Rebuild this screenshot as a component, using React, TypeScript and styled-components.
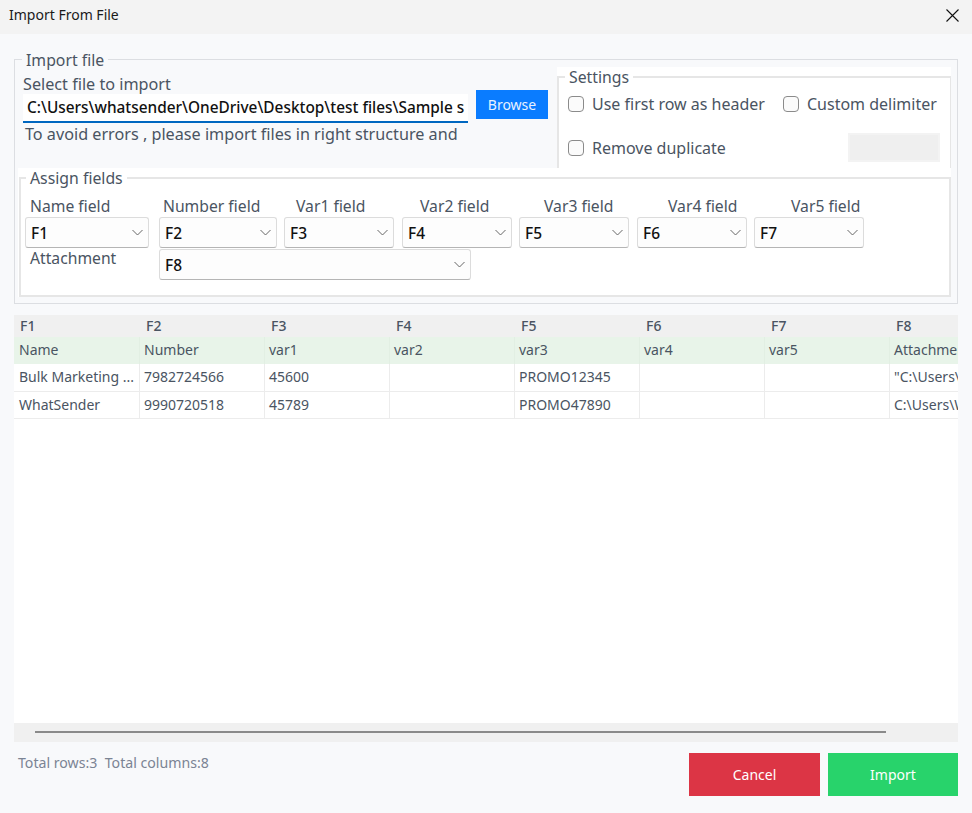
import React from 'react';
import styled, { createGlobalStyle } from 'styled-components';

const GlobalStyle = createGlobalStyle`
  html, body {
    margin: 0;
    padding: 0;
    background: #f8f9fb;
  }
  * {
    box-sizing: border-box;
  }
`;

const HEAD = ['F1', 'F2', 'F3', 'F4', 'F5', 'F6', 'F7', 'F8'];
const ROWS = [
  ['Name', 'Number', 'var1', 'var2', 'var3', 'var4', 'var5', 'Attachment'],
  ['Bulk Marketing ...', '7982724566', '45600', '', 'PROMO12345', '', '', '"C:\\Users\\W'],
  ['WhatSender', '9990720518', '45789', '', 'PROMO47890', '', '', 'C:\\Users\\W'],
];
const ROW_HEIGHTS = [27, 28, 27];
const FIELDS = [
  { label: 'Name field', value: 'F1', width: 124, inset: 5, gap: 10 },
  { label: 'Number field', value: 'F2', width: 118, inset: 4, gap: 7 },
  { label: 'Var1 field', value: 'F3', width: 110, inset: 12, gap: 8 },
  { label: 'Var2 field', value: 'F4', width: 110, inset: 18, gap: 7 },
  { label: 'Var3 field', value: 'F5', width: 110, inset: 25, gap: 8 },
  { label: 'Var4 field', value: 'F6', width: 110, inset: 31, gap: 7 },
  { label: 'Var5 field', value: 'F7', width: 110, inset: 37, gap: 0 },
];

function Chevron() {
  return (
    <svg width="11" height="7" viewBox="0 0 11 7" fill="none">
      <path d="M0.5 1l5 5 5-5" stroke="#666" strokeWidth="1" />
    </svg>
  );
}

function Dropdown({ value, width }: { value: string; width: number }) {
  return (
    <Select $width={width}>
      <span>{value}</span>
      <Chevron />
    </Select>
  );
}

function Check({ label, width }: { label: string; width?: number }) {
  return (
    <CheckRow $width={width}>
      <CheckBox />
      <span>{label}</span>
    </CheckRow>
  );
}

export default function App() {
  return (
    <Window>
      <GlobalStyle />
      <TitleBar>
        <span>Import From File</span>
        <svg width="13" height="13" viewBox="0 0 13 13" fill="none">
          <path d="M0.5 0.5l12 12M12.5 0.5l-12 12" stroke="#111" strokeWidth="1.1" />
        </svg>
      </TitleBar>
      <Body>
        <ImportGroup>
          <GroupTitle $left={4}>Import file</GroupTitle>
          <TopRow>
            <FileColumn>
              <FileLabel>Select file to import</FileLabel>
              <FileRow>
                <PathInput>C:\Users\whatsender\OneDrive\Desktop\test files\Sample s</PathInput>
                <BrowseButton>Browse</BrowseButton>
              </FileRow>
              <Hint>To avoid errors , please import files in right structure and</Hint>
            </FileColumn>
            <SettingsPanel>
              <SettingsGroup>
                <GroupTitle $left={-3}>Settings</GroupTitle>
                <SettingsRow>
                  <Check label="Use first row as header" width={215} />
                  <Check label="Custom delimiter" />
                </SettingsRow>
                <SettingsRow>
                  <Check label="Remove duplicate" width={282} />
                  <DelimiterInput />
                </SettingsRow>
              </SettingsGroup>
            </SettingsPanel>
          </TopRow>
          <AssignPanel>
            <AssignGroup>
              <GroupTitle $left={1}>Assign fields</GroupTitle>
              <FieldRow>
                {FIELDS.map(f => (
                  <Field key={f.value} $gap={f.gap}>
                    <FieldLabel $inset={f.inset}>{f.label}</FieldLabel>
                    <Dropdown value={f.value} width={f.width} />
                  </Field>
                ))}
              </FieldRow>
              <AttachmentRow>
                <AttachmentLabel>Attachment</AttachmentLabel>
                <Dropdown value="F8" width={312} />
              </AttachmentRow>
            </AssignGroup>
          </AssignPanel>
        </ImportGroup>

        <TableArea>
          <HeadRow>
            {HEAD.map(h => (
              <HeadCell key={h}>{h}</HeadCell>
            ))}
          </HeadRow>
          {ROWS.map((row, i) => (
            <DataRow key={i} $first={i === 0} $height={ROW_HEIGHTS[i]}>
              {row.map((cell, j) => (
                <DataCell key={j} $first={i === 0}>
                  {cell}
                </DataCell>
              ))}
            </DataRow>
          ))}
        </TableArea>
        <ScrollTrack>
          <ScrollThumb />
        </ScrollTrack>

        <Footer>
          <Totals>Total rows:3&nbsp;&nbsp;Total columns:8</Totals>
          <Actions>
            <ActionButton $color="#dc3545" $width={131}>
              Cancel
            </ActionButton>
            <ActionButton $color="#28d36b" $width={130}>
              Import
            </ActionButton>
          </Actions>
        </Footer>
      </Body>
    </Window>
  );
}

const Window = styled.div`
  width: 972px;
  height: 813px;
  display: flex;
  flex-direction: column;
  overflow: hidden;
  background: #f8f9fb;
  font-family: 'Noto Sans', 'Open Sans', sans-serif;
  font-size: 14px;
  color: #4a5462;
`;

const TitleBar = styled.div`
  height: 34px;
  flex: none;
  display: flex;
  align-items: center;
  justify-content: space-between;
  padding: 0 13px 4px 9px;
  background: #f3f3f3;
  color: #1a1a1a;
  font-size: 14px;
  line-height: 18px;
`;

const Body = styled.div`
  flex: 1;
  display: flex;
  flex-direction: column;
  padding: 16px 14px 0;
`;

const ImportGroup = styled.fieldset`
  height: 254px;
  flex: none;
  margin: 0;
  padding: 0 6px 0 3px;
  border: 1px solid #dcdee2;
  min-width: 0;
`;

const GroupTitle = styled.legend<{ $left: number }>`
  margin-left: ${({ $left }) => $left}px;
  padding: 0 4px;
  height: 19px;
  line-height: 21px;
  font-size: 15.8px;
  color: #4a5462;
`;

const TopRow = styled.div`
  height: 99px;
  display: flex;
  justify-content: space-between;
`;

const FileColumn = styled.div`
  width: 530px;
  padding: 5px 0 0 5px;
  display: flex;
  flex-direction: column;
`;

const FileLabel = styled.div`
  height: 20px;
  line-height: 20px;
  font-size: 16.2px;
`;

const FileRow = styled.div`
  display: flex;
  align-items: flex-start;
  gap: 8px;
`;

const PathInput = styled.div`
  width: 445px;
  height: 29px;
  padding: 0 0 0 4px;
  background: #fff;
  border-bottom: 2px solid #0067c0;
  color: #111;
  font-size: 15.4px;
  font-weight: 500;
  line-height: 27px;
  white-space: nowrap;
  overflow: hidden;
`;

const BrowseButton = styled.button`
  width: 72px;
  height: 29px;
  margin-top: -4px;
  border: none;
  background: #0a7cff;
  color: #e8f2ff;
  font: inherit;
  font-size: 14px;
  padding: 0;
`;

const Hint = styled.div`
  padding-left: 2px;
  line-height: 22px;
  font-size: 16.2px;
  white-space: nowrap;
`;

const SettingsPanel = styled.div`
  width: 394px;
  height: 101px;
  margin-top: -2px;
  background: #fff;
`;

const SettingsGroup = styled.fieldset`
  height: 101px;
  margin: 0;
  padding: 0 10px 0 9px;
  border: 2px solid #e6e6e6;
  border-bottom: none;
  border-right-width: 1px;
  min-width: 0;
`;

const SettingsRow = styled.div`
  height: 44px;
  display: flex;
  align-items: center;

  &:first-of-type {
    margin-top: -4px;
  }
`;

const CheckRow = styled.label<{ $width?: number }>`
  display: flex;
  align-items: center;
  gap: 8px;
  width: ${({ $width }) => ($width ? `${$width}px` : 'auto')};
  font-size: 16px;
  white-space: nowrap;
`;

const CheckBox = styled.span`
  width: 16px;
  height: 16px;
  flex: none;
  border: 1.5px solid #8b8b8b;
  border-radius: 4px;
  background: #fbfbfb;
`;

const DelimiterInput = styled.div`
  width: 93px;
  height: 29px;
  margin-bottom: 2px;
  background: #efefef;
  border: 2px solid #f3f3f3;
`;

const AssignPanel = styled.div`
  height: 129px;
  padding: 0 0 0 1px;
  background: #fff;
`;

const AssignGroup = styled.fieldset`
  height: 129px;
  margin: 0;
  padding: 0 0 0 4px;
  border: 2px solid #e6e6e6;
  min-width: 0;
`;

const FieldRow = styled.div`
  display: flex;
  padding-top: 9px;
`;

const Field = styled.div<{ $gap: number }>`
  display: flex;
  flex-direction: column;
  margin-right: ${({ $gap }) => $gap}px;
`;

const FieldLabel = styled.div<{ $inset: number }>`
  height: 21px;
  line-height: 21px;
  padding-left: ${({ $inset }) => $inset}px;
  font-size: 15.7px;
  white-space: nowrap;
`;

const AttachmentRow = styled.div`
  display: flex;
  margin-top: 1px;
`;

const AttachmentLabel = styled.div`
  width: 134px;
  padding-left: 5px;
  line-height: 18px;
  font-size: 15.7px;
`;

const Select = styled.div<{ $width: number }>`
  width: ${({ $width }) => $width}px;
  height: 31px;
  display: flex;
  align-items: center;
  justify-content: space-between;
  padding: 0 5px 0 5px;
  background: #fdfdfd;
  border: 1px solid #dcdcdc;
  border-bottom-color: #b5b5b5;
  border-radius: 3px;
  color: #111;
  font-size: 15.5px;
  font-weight: 500;
`;

const TableArea = styled.div`
  height: 408px;
  flex: none;
  margin-top: 11px;
  background: #fff;
  overflow: hidden;
`;

const HeadRow = styled.div`
  height: 22px;
  display: flex;
  background: #f0f0f0;
`;

const HeadCell = styled.div`
  width: 125px;
  flex: none;
  padding-left: 6px;
  line-height: 22px;
  font-size: 14px;
  font-weight: 500;

  &:first-child {
    width: 126px;
  }
`;

const DataRow = styled.div<{ $first: boolean; $height: number }>`
  height: ${({ $height }) => $height}px;
  display: flex;
  background: ${({ $first }) => ($first ? '#e8f4e9' : '#fff')};
  border-bottom: ${({ $first }) => ($first ? 'none' : '1px solid #ececec')};
`;

const DataCell = styled.div<{ $first: boolean }>`
  width: 125px;
  flex: none;
  padding-left: 4px;
  border-right: 1px solid ${({ $first }) => ($first ? '#e2efe3' : '#ececec')};
  line-height: 26px;
  font-size: 14px;
  white-space: nowrap;
  overflow: hidden;

  &:first-child {
    width: 126px;
    padding-left: 5px;
  }
`;

const ScrollTrack = styled.div`
  height: 19px;
  flex: none;
  padding: 8px 0 0 21px;
  background: #f0f0f0;
`;

const ScrollThumb = styled.div`
  width: 851px;
  height: 2px;
  background: #8a8a8a;
`;

const Footer = styled.div`
  flex: 1;
  display: flex;
  justify-content: space-between;
  padding: 11px 0 0 4px;
`;

const Totals = styled.div`
  line-height: 18px;
  padding-top: 1px;
  font-size: 14.15px;
  color: #7b8494;
`;

const Actions = styled.div`
  display: flex;
  gap: 8px;
`;

const ActionButton = styled.button<{ $color: string; $width: number }>`
  width: ${({ $width }) => $width}px;
  height: 43px;
  border: none;
  padding: 0;
  background: ${({ $color }) => $color};
  color: #fff;
  font: inherit;
  font-size: 14px;
`;
